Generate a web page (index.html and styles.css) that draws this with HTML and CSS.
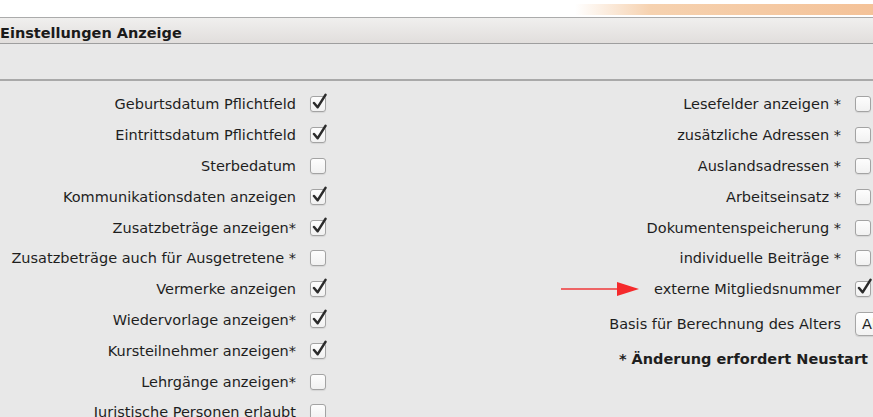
FILE: index.html
```html
<!DOCTYPE html>
<html lang="de">
<head>
  <meta charset="UTF-8" />
  <title>Einstellungen Anzeige</title>
  <link rel="stylesheet" href="styles.css">
</head>
<body>
  <svg width="0" height="0" class="defs">
    <symbol id="tick" viewBox="0 0 16 18">
      <path d="M3 10 L6.6 14.3 L14.5 1.8" fill="none" stroke="#2b2b2b" stroke-width="2.5" stroke-linecap="round" stroke-linejoin="round"/>
    </symbol>
  </svg>

  <div class="topstrip"></div>
  <div class="titlebar"><h1>Einstellungen Anzeige</h1></div>
  <div class="toolbar"></div>

  <div class="settings">
    <div class="col col-left">
      <div class="row"><span class="label">Geburtsdatum Pflichtfeld</span><span class="check"><svg><use href="#tick"/></svg></span></div>
      <div class="row"><span class="label">Eintrittsdatum Pflichtfeld</span><span class="check"><svg><use href="#tick"/></svg></span></div>
      <div class="row"><span class="label">Sterbedatum</span><span class="check"></span></div>
      <div class="row"><span class="label">Kommunikationsdaten anzeigen</span><span class="check"><svg><use href="#tick"/></svg></span></div>
      <div class="row"><span class="label">Zusatzbeträge anzeigen*</span><span class="check"><svg><use href="#tick"/></svg></span></div>
      <div class="row"><span class="label">Zusatzbeträge auch für Ausgetretene *</span><span class="check"></span></div>
      <div class="row"><span class="label">Vermerke anzeigen</span><span class="check"><svg><use href="#tick"/></svg></span></div>
      <div class="row"><span class="label">Wiedervorlage anzeigen*</span><span class="check"><svg><use href="#tick"/></svg></span></div>
      <div class="row"><span class="label">Kursteilnehmer anzeigen*</span><span class="check"><svg><use href="#tick"/></svg></span></div>
      <div class="row"><span class="label">Lehrgänge anzeigen*</span><span class="check"></span></div>
      <div class="row"><span class="label">Juristische Personen erlaubt</span><span class="check"></span></div>
    </div>

    <div class="col col-right">
      <div class="row"><span class="label">Lesefelder anzeigen *</span><span class="check"></span></div>
      <div class="row"><span class="label">zusätzliche Adressen *</span><span class="check"></span></div>
      <div class="row"><span class="label">Auslandsadressen *</span><span class="check"></span></div>
      <div class="row"><span class="label">Arbeitseinsatz *</span><span class="check"></span></div>
      <div class="row"><span class="label">Dokumentenspeicherung *</span><span class="check"></span></div>
      <div class="row"><span class="label">individuelle Beiträge *</span><span class="check"></span></div>
      <div class="row">
        <span class="label">
          <svg class="arrow" width="78" height="14" viewBox="0 0 78 14">
            <line x1="0" y1="7" x2="58" y2="7" stroke="#f0393a" stroke-width="1.3"/>
            <polygon points="56,0 78,7 56,14" fill="#f52a2c"/>
          </svg>
          externe Mitgliedsnummer
        </span>
        <span class="check"><svg><use href="#tick"/></svg></span>
      </div>
      <div class="row row-popup"><span class="label">Basis für Berechnung des Alters</span><span class="popup">Aktuelles Datum</span></div>
      <p class="note">* Änderung erfordert Neustart</p>
    </div>
  </div>
</body>
</html>
```

FILE: styles.css
```css
html, body {
  margin: 0;
  height: 100%;
  overflow: hidden;
}
body {
  font-family: "DejaVu Sans", "Liberation Sans", sans-serif;
  font-size: 14.5px;
  color: #1e1e1e;
  background: #e8e8e8;
}
.defs {
  position: absolute;
}
.topstrip {
  height: 17px;
  background: #fff;
  background-image: linear-gradient(to right, #fff 575px, #f6d2b0 650px, #f4c298 873px);
  background-size: 100% 11px;
  background-position: 0 4px;
  background-repeat: no-repeat;
}
.titlebar {
  height: 25px;
  border-top: 1px solid #ababab;
  border-bottom: 1px solid #9e9e9e;
  background: linear-gradient(#f0efee, #e1dedc);
}
.titlebar h1 {
  margin: 0;
  font-size: 14.5px;
  font-weight: bold;
  line-height: 30px;
  color: #1a1a1a;
}
.toolbar {
  height: 35px;
  border-bottom: 2px solid #a9a9a9;
  background: #e8e8e8;
}
.settings {
  display: grid;
  grid-template-columns: 538px 1fr;
  padding-top: 8px;
}
.col .row {
  display: grid;
  grid-template-columns: 296px 16px;
  column-gap: 14px;
  align-items: center;
  height: 30.8px;
}
.col-right .row {
  grid-template-columns: 303px 16px;
}
.label {
  text-align: right;
  white-space: nowrap;
  display: flex;
  justify-content: flex-end;
  align-items: center;
}
.arrow {
  margin-right: 15px;
}
.check {
  width: 14px;
  height: 14px;
  border: 1px solid #a3a3a3;
  border-radius: 3px;
  background: linear-gradient(#fdfdfd, #f1f1f1);
  box-shadow: 0 1px 1px rgba(0,0,0,0.08);
  position: relative;
}
.check svg {
  position: absolute;
  left: 0;
  top: -4px;
  width: 16px;
  height: 18px;
  overflow: visible;
}
.row-popup {
  height: 40px;
  margin-top: 4px;
}
.popup {
  display: block;
  width: 90px;
  height: 22px;
  line-height: 22px;
  padding-left: 6px;
  border: 1px solid #a6a6a6;
  border-radius: 4px;
  background: linear-gradient(#ffffff, #f2f2f2);
  box-shadow: 0 1px 1px rgba(0,0,0,0.1);
  white-space: nowrap;
}
.note {
  margin: 12px 0 0;
  padding-right: 5px;
  text-align: right;
  font-weight: bold;
}
```
